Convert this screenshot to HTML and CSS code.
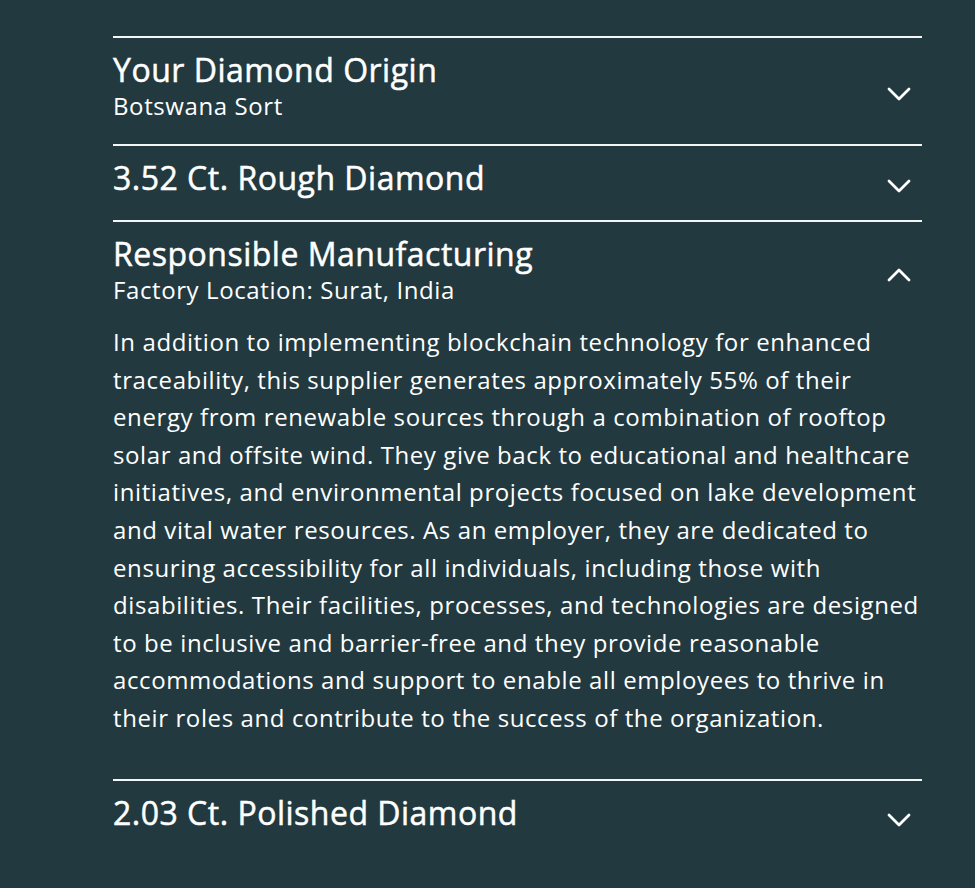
FILE: index.html
```html
<!DOCTYPE html>
<html lang="en">
<head>
<meta charset="utf-8">
<title>Diamond Journey</title>
<link rel="stylesheet" href="styles.css">
</head>
<body>
<div class="accordion">
  <section class="item">
    <div class="header">
      <div class="heading">
        <h2 class="title">Your Diamond Origin</h2>
        <p class="subtitle">Botswana Sort</p>
      </div>
      <svg class="chev" viewBox="0 0 24 14" width="24" height="14"><path d="M2 2 L12 12 L22 2"/></svg>
    </div>
  </section>
  <section class="item">
    <div class="header">
      <div class="heading">
        <h2 class="title">3.52 Ct. Rough Diamond</h2>
      </div>
      <svg class="chev" viewBox="0 0 24 14" width="24" height="14"><path d="M2 2 L12 12 L22 2"/></svg>
    </div>
  </section>
  <section class="item open">
    <div class="header">
      <div class="heading">
        <h2 class="title">Responsible Manufacturing</h2>
        <p class="subtitle">Factory Location: Surat, India</p>
      </div>
      <svg class="chev" viewBox="0 0 24 14" width="24" height="14"><path d="M2 12 L12 2 L22 12"/></svg>
    </div>
    <p class="body">In addition to implementing blockchain technology for enhanced traceability, this supplier generates approximately 55% of their energy from renewable sources through a combination of rooftop solar and offsite wind. They give back to educational and healthcare initiatives, and environmental projects focused on lake development and vital water resources. As an employer, they are dedicated to ensuring accessibility for all individuals, including those with disabilities. Their facilities, processes, and technologies are designed to be inclusive and barrier-free and they provide reasonable accommodations and support to enable all employees to thrive in their roles and contribute to the success of the organization.</p>
  </section>
  <section class="item">
    <div class="header">
      <div class="heading">
        <h2 class="title">2.03 Ct. Polished Diamond</h2>
      </div>
      <svg class="chev" viewBox="0 0 24 14" width="24" height="14"><path d="M2 2 L12 12 L22 2"/></svg>
    </div>
  </section>
</div>
</body>
</html>
```
FILE: styles.css
```css
html, body {
  margin: 0;
  padding: 0;
  background: #223a3f;
}
body {
  font-family: "Open Sans", "Noto Sans", sans-serif;
  color: #ffffff;
  height: 888px;
  overflow: hidden;
}
.accordion {
  width: 809px;
  margin-left: 113px;
  padding-top: 36px;
}
.item {
  border-top: 2px solid #f4f6f5;
}
.header {
  display: flex;
  justify-content: space-between;
  align-items: center;
}
.heading {
  padding: 12px 0 22px 0;
}
.item.open .heading {
  padding-bottom: 17px;
}
.title {
  margin: 0;
  font-size: 32px;
  font-weight: 400;
  line-height: 40px;
  letter-spacing: 0.5px;
  -webkit-text-stroke: 0.5px #ffffff;
}
.subtitle {
  margin: 0;
  font-size: 24px;
  line-height: 32px;
  letter-spacing: 0.6px;
}
.chev {
  display: block;
  margin: 5px 11px 0 0;
  fill: none;
  stroke: #ffffff;
  stroke-width: 2.8;
  stroke-linecap: round;
  stroke-linejoin: round;
}
.body {
  margin: 0;
  padding: 0 0 42px 0;
  font-size: 24px;
  line-height: 37.6px;
  letter-spacing: 0.6px;
}
```
